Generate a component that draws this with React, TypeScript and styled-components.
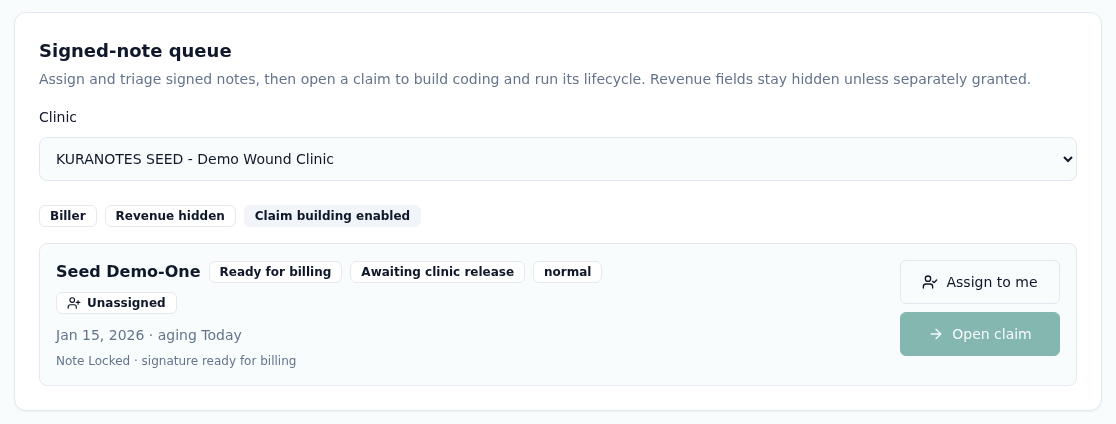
import React from "react";
import styled, { createGlobalStyle } from "styled-components";
import { UserPlus, UserCheck, ArrowRight } from "lucide-react";

const Global = createGlobalStyle`
  * { box-sizing: border-box; }
  html, body { margin: 0; padding: 0; background: #f8fcfd; }
  body {
    font-family: "DejaVu Sans", sans-serif;
    color: #0f172a;
  }
`;

const Page = styled.main`
  padding: 12px 14px 13px;
  will-change: transform;
`;

const Card = styled.section`
  background: #fff;
  border: 1px solid #e2e8f0;
  border-radius: 12px;
  padding: 24px;
  box-shadow: 0 1px 2px rgba(15, 23, 42, 0.05);
`;

const Title = styled.h2`
  margin: 0;
  font-size: 18px;
  line-height: 28px;
  font-weight: 700;
  color: #0f172a;
`;

const Sub = styled.p`
  margin: 4px 0 0;
  font-size: 14px;
  line-height: 20px;
  color: #64748b;
`;

const Label = styled.label`
  display: block;
  margin-top: 18px;
  font-size: 14px;
  line-height: 20px;
  color: #0f172a;
`;

const Select = styled.select`
  display: block;
  width: 100%;
  height: 44px;
  margin-top: 10px;
  padding: 0 12px;
  font-family: inherit;
  font-size: 14px;
  color: #0f172a;
  background: #f9fcfd;
  border: 1px solid #e2e8f0;
  border-radius: 8px;
`;

const ChipRow = styled.div`
  display: flex;
  flex-wrap: wrap;
  gap: 8px;
  margin-top: 24px;
`;

const Chip = styled.span<{ $soft?: boolean }>`
  display: inline-flex;
  align-items: center;
  gap: 6px;
  height: 22px;
  padding: 0 10px;
  font-size: 12px;
  font-weight: 700;
  line-height: 16px;
  color: #0f172a;
  white-space: nowrap;
  border-radius: 6px;
  border: 1px solid ${(p) => (p.$soft ? "transparent" : "#e5e9ef")};
  background: ${(p) => (p.$soft ? "#f1f5f9" : "#fff")};
`;

const Item = styled.article`
  display: flex;
  justify-content: space-between;
  align-items: flex-start;
  margin-top: 16px;
  padding: 16px;
  background: #f9fcfd;
  border: 1px solid #e5e9ef;
  border-radius: 8px;
`;

const ItemMain = styled.div`
  display: flex;
  flex-direction: column;
`;

const Heading = styled.div`
  display: flex;
  flex-wrap: wrap;
  align-items: center;
  gap: 8px;
  max-width: 560px;
`;

const Name = styled.h3`
  margin: 0;
  font-size: 16px;
  line-height: 24px;
  font-weight: 700;
  color: #0f172a;
`;

const Meta = styled.p`
  margin: 11px 0 0;
  font-size: 14px;
  line-height: 20px;
  color: #64748b;
`;

const Note = styled.p`
  margin: 8px 0 0;
  font-size: 12px;
  line-height: 16px;
  color: #64748b;
`;

const Actions = styled.div`
  display: flex;
  flex-direction: column;
  gap: 8px;
  width: 160px;
`;

const Button = styled.button<{ $primary?: boolean }>`
  display: flex;
  align-items: center;
  justify-content: center;
  gap: 8px;
  height: 44px;
  font-family: inherit;
  font-size: 14px;
  border-radius: 6px;
  color: ${(p) => (p.$primary ? "#f8fafc" : "#0f172a")};
  background: ${(p) => (p.$primary ? "#83b7b0" : "#f9fcfd")};
  border: 1px solid ${(p) => (p.$primary ? "#83b7b0" : "#e2e8f0")};
`;

export default function App() {
  return (
    <Page>
      <Global />
      <Card>
        <Title>Signed-note queue</Title>
        <Sub>
          Assign and triage signed notes, then open a claim to build coding and run its lifecycle. Revenue fields stay
          hidden unless separately granted.
        </Sub>
        <Label htmlFor="clinic">Clinic</Label>
        <Select id="clinic" defaultValue="seed">
          <option value="seed">KURANOTES SEED - Demo Wound Clinic</option>
        </Select>
        <ChipRow>
          <Chip>Biller</Chip>
          <Chip>Revenue hidden</Chip>
          <Chip $soft>Claim building enabled</Chip>
        </ChipRow>
        <Item>
          <ItemMain>
            <Heading>
              <Name>Seed Demo-One</Name>
              <Chip>Ready for billing</Chip>
              <Chip>Awaiting clinic release</Chip>
              <Chip>normal</Chip>
              <Chip>
                <UserPlus size={14} strokeWidth={2} />
                Unassigned
              </Chip>
            </Heading>
            <Meta>Jan 15, 2026 · aging Today</Meta>
            <Note>Note Locked · signature ready for billing</Note>
          </ItemMain>
          <Actions>
            <Button>
              <UserCheck size={16} strokeWidth={2} />
              Assign to me
            </Button>
            <Button $primary>
              <ArrowRight size={16} strokeWidth={2} />
              Open claim
            </Button>
          </Actions>
        </Item>
      </Card>
    </Page>
  );
}
